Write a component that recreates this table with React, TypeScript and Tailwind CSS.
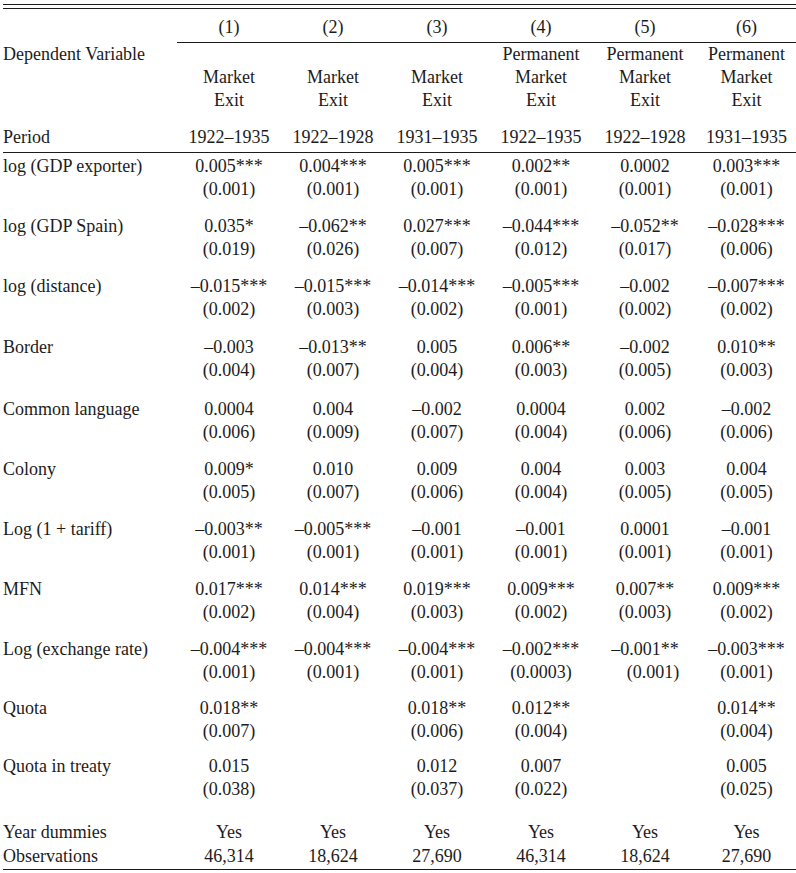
import React from "react";

type Row = {
  label: string;
  coef: string[];
  se: string[];
  gap: string;
};

const rows: Row[] = [
  {
    label: "log (GDP exporter)",
    coef: ["0.005***", "0.004***", "0.005***", "0.002**", "0.0002", "0.003***"],
    se: ["(0.001)", "(0.001)", "(0.001)", "(0.001)", "(0.001)", "(0.001)"],
    gap: "",
  },
  {
    label: "log (GDP Spain)",
    coef: ["0.035*", "–0.062**", "0.027***", "–0.044***", "–0.052**", "–0.028***"],
    se: ["(0.019)", "(0.026)", "(0.007)", "(0.012)", "(0.017)", "(0.006)"],
    gap: "mt-[14px]",
  },
  {
    label: "log (distance)",
    coef: ["–0.015***", "–0.015***", "–0.014***", "–0.005***", "–0.002", "–0.007***"],
    se: ["(0.002)", "(0.003)", "(0.002)", "(0.001)", "(0.002)", "(0.002)"],
    gap: "mt-[14px]",
  },
  {
    label: "Border",
    coef: ["–0.003", "–0.013**", "0.005", "0.006**", "–0.002", "0.010**"],
    se: ["(0.004)", "(0.007)", "(0.004)", "(0.003)", "(0.005)", "(0.003)"],
    gap: "mt-[15px]",
  },
  {
    label: "Common language",
    coef: ["0.0004", "0.004", "–0.002", "0.0004", "0.002", "–0.002"],
    se: ["(0.006)", "(0.009)", "(0.007)", "(0.004)", "(0.006)", "(0.006)"],
    gap: "mt-[16px]",
  },
  {
    label: "Colony",
    coef: ["0.009*", "0.010", "0.009", "0.004", "0.003", "0.004"],
    se: ["(0.005)", "(0.007)", "(0.006)", "(0.004)", "(0.005)", "(0.005)"],
    gap: "mt-[14px]",
  },
  {
    label: "Log (1 + tariff)",
    coef: ["–0.003**", "–0.005***", "–0.001", "–0.001", "0.0001", "–0.001"],
    se: ["(0.001)", "(0.001)", "(0.001)", "(0.001)", "(0.001)", "(0.001)"],
    gap: "mt-[14px]",
  },
  {
    label: "MFN",
    coef: ["0.017***", "0.014***", "0.019***", "0.009***", "0.007**", "0.009***"],
    se: ["(0.002)", "(0.004)", "(0.003)", "(0.002)", "(0.003)", "(0.002)"],
    gap: "mt-[14px]",
  },
  {
    label: "Log (exchange rate)",
    coef: ["–0.004***", "–0.004***", "–0.004***", "–0.002***", "–0.001**", "–0.003***"],
    se: ["(0.001)", "(0.001)", "(0.001)", "(0.0003)", "(0.001)", "(0.001)"],
    gap: "mt-[14px]",
  },
  {
    label: "Quota",
    coef: ["0.018**", "", "0.018**", "0.012**", "", "0.014**"],
    se: ["(0.007)", "", "(0.006)", "(0.004)", "", "(0.004)"],
    gap: "mt-[13px]",
  },
  {
    label: "Quota in treaty",
    coef: ["0.015", "", "0.012", "0.007", "", "0.005"],
    se: ["(0.038)", "", "(0.037)", "(0.022)", "", "(0.025)"],
    gap: "mt-[12px]",
  },
];

const grid = "grid grid-cols-[174px_104px_104px_104px_104px_104px_1fr]";

const Rule = ({ className = "" }: { className?: string }) => (
  <div className={`h-px bg-[#1c1c1c] ${className}`} />
);

export default function App() {
  const depVar = [
    ["", "Market", "Exit"],
    ["", "Market", "Exit"],
    ["", "Market", "Exit"],
    ["Permanent", "Market", "Exit"],
    ["Permanent", "Market", "Exit"],
    ["Permanent", "Market", "Exit"],
  ];
  const periods = ["1922–1935", "1922–1928", "1931–1935", "1922–1935", "1922–1928", "1931–1935"];

  return (
    <div
      className="w-[796px] h-[873px] bg-white pl-[3px] text-[18px] leading-[23px] text-[#1c1c1c]"
      style={{ fontFamily: '"Liberation Serif", "Times New Roman", serif' }}
    >
      <div className="pt-[4px]">
        <Rule />
        <Rule className="mt-[3px]" />
      </div>

      {/* column numbers */}
      <div className={`${grid} pt-[7px] h-[33px]`}>
        <div />
        {[1, 2, 3, 4, 5, 6].map((n) => (
          <div key={n} className="text-center">
            ({n})
          </div>
        ))}
      </div>
      <div className={grid}>
        <div />
        <Rule className="col-span-6" />
      </div>

      {/* dependent variable */}
      <div className={grid}>
        <div>Dependent Variable</div>
        {depVar.map((lines, i) => (
          <div key={i} className="flex flex-col items-center">
            {lines.map((l, j) => (
              <div key={j} className="h-[23px]">
                {l}
              </div>
            ))}
          </div>
        ))}
      </div>

      {/* period */}
      <div className={`${grid} mt-[14px]`}>
        <div>Period</div>
        {periods.map((p, i) => (
          <div key={i} className="text-center">
            {p}
          </div>
        ))}
      </div>
      <Rule className="mt-[3px]" />

      {/* coefficients */}
      <div className="pt-[2px]">
        {rows.map((row) => (
          <div key={row.label} className={`${grid} ${row.gap}`}>
            <div>{row.label}</div>
            {row.coef.map((c, i) => (
              <div key={i} className="flex flex-col items-center">
                <div className="h-[23px]">{c}</div>
                <div
                  className={`h-[23px] ${
                    row.label === "Log (exchange rate)" && i === 4 ? "pl-[16px]" : ""
                  }`}
                >
                  {row.se[i]}
                </div>
              </div>
            ))}
          </div>
        ))}
      </div>

      {/* footer */}
      <div className={`${grid} mt-[20px]`}>
        <div>Year dummies</div>
        {[0, 1, 2, 3, 4, 5].map((i) => (
          <div key={i} className="text-center">
            Yes
          </div>
        ))}
      </div>
      <div className={`${grid} mt-[1px]`}>
        <div>Observations</div>
        {["46,314", "18,624", "27,690", "46,314", "18,624", "27,690"].map((v, i) => (
          <div key={i} className="text-center">
            {v}
          </div>
        ))}
      </div>
      <Rule className="mt-[1px]" />
    </div>
  );
}
